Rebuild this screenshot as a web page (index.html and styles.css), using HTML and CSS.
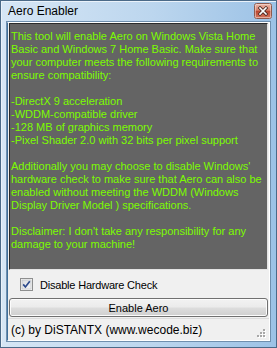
FILE: index.html
```html
<!DOCTYPE html>
<html>
<head>
<meta charset="utf-8">
<link rel="stylesheet" href="styles.css">
</head>
<body>
<div class="window">
  <div class="titlebar">
    <span class="title">Aero Enabler</span>
    <svg class="close" width="18" height="16" viewBox="0 0 18 16">
      <defs>
        <linearGradient id="cg" x1="0" y1="0" x2="0" y2="1">
          <stop offset="0" stop-color="#eab3a3"/>
          <stop offset="0.45" stop-color="#d8806a"/>
          <stop offset="0.5" stop-color="#b8432d"/>
          <stop offset="1" stop-color="#d4745c"/>
        </linearGradient>
      </defs>
      <rect x="0.5" y="0.5" width="17" height="15" rx="2" fill="#f4e6e2" stroke="#8e5a4e"/>
      <rect x="1.5" y="1.5" width="15" height="13" rx="1" fill="url(#cg)"/>
      <path d="M6 5 L12 11 M12 5 L6 11" stroke="#4a2a22" stroke-width="3.2" stroke-linecap="square"/>
      <path d="M6 5 L12 11 M12 5 L6 11" stroke="#ffffff" stroke-width="1.6" stroke-linecap="square"/>
    </svg>
  </div>
  <div class="client">
    <div class="textbox">
      <p class="info">This tool will enable Aero on Windows Vista Home<br>Basic and Windows 7 Home Basic. Make sure that<br>your computer meets the following requirements to<br>ensure compatibility:<br><br>-DirectX 9 acceleration<br>-WDDM-compatible driver<br>-128 MB of graphics memory<br>-Pixel Shader 2.0 with 32 bits per pixel support<br><br>Additionally you may choose to disable Windows'<br>hardware check to make sure that Aero can also be<br>enabled without meeting the WDDM (Windows<br>Display Driver Model ) specifications.<br><br>Disclaimer: I don't take any responsibility for any<br>damage to your machine!</p>
    </div>
    <label class="check-row">
      <svg class="checkbox" width="13" height="13" viewBox="0 0 13 13">
        <defs>
          <linearGradient id="kg" x1="0" y1="0" x2="1" y2="1">
            <stop offset="0" stop-color="#d9dcdf"/>
            <stop offset="1" stop-color="#f6f6f6"/>
          </linearGradient>
        </defs>
        <rect x="0.5" y="0.5" width="12" height="12" fill="#f4f4f4" stroke="#8e8f8f"/>
        <rect x="2" y="2" width="9" height="9" fill="url(#kg)" stroke="#b9bcc0" stroke-width="0.6"/>
        <path d="M3.2 6.4 L5.4 9 L9.8 3.2" fill="none" stroke="#2c4a8c" stroke-width="1.7"/>
      </svg>
      <span>Disable Hardware Check</span>
    </label>
    <button class="btn">Enable Aero</button>
    <div class="statusbar">
      <span>(c) by DiSTANTX (www.wecode.biz)</span>
      <svg class="grip" width="10" height="10" viewBox="0 0 10 10">
        <g fill="#ffffff">
          <rect x="8" y="2" width="2" height="2"/>
          <rect x="5" y="5" width="2" height="2"/>
          <rect x="8" y="5" width="2" height="2"/>
          <rect x="2" y="8" width="2" height="2"/>
          <rect x="5" y="8" width="2" height="2"/>
          <rect x="8" y="8" width="2" height="2"/>
        </g>
        <g fill="#a8a8a8">
          <rect x="7" y="1" width="2" height="2"/>
          <rect x="4" y="4" width="2" height="2"/>
          <rect x="7" y="4" width="2" height="2"/>
          <rect x="1" y="7" width="2" height="2"/>
          <rect x="4" y="7" width="2" height="2"/>
          <rect x="7" y="7" width="2" height="2"/>
        </g>
      </svg>
    </div>
  </div>
</div>
</body>
</html>
```

FILE: styles.css
```css
html, body {
  margin: 0;
  padding: 0;
  width: 277px;
  height: 348px;
  overflow: hidden;
  background: #ffffff;
}

.window {
  box-sizing: border-box;
  width: 277px;
  height: 348px;
  border: 1px solid #4b6a88;
  background: linear-gradient(to right, #d6e6f5 0%, #bcd6ee 55%, #9cc2e6 100%);
  box-shadow: inset 1px 1px 0 #eaf2fa;
  display: flex;
  flex-direction: column;
  padding: 0 6px 6px 6px;
  font-family: "Liberation Sans", Arial, sans-serif;
}

.titlebar {
  height: 21px;
  display: flex;
  align-items: center;
  justify-content: space-between;
  padding-left: 1px;
}

.title {
  font-size: 12px;
  color: #000;
  margin-top: -1px;
}

.close {
  display: block;
  margin-right: -2px;
  margin-top: -1px;
}

.client {
  flex: 1;
  display: flex;
  flex-direction: column;
  background: #f0f0f0;
  border: 1px solid #ffffff;
  border-left-color: #3f6f9b;
  border-top-color: #ffffff;
  outline: 1px solid #6f8fae;
}

.textbox {
  box-sizing: border-box;
  height: 247px;
  margin: 0 1px;
  background: #646464;
  border: 1px solid;
  border-color: #2b2b2b #e3e3e3 #e3e3e3 #2b2b2b;
  padding: 6px 2px 0 1px;
}

.info {
  margin: 0;
  font-size: 11px;
  line-height: 13px;
  color: #7cfc00;
  white-space: nowrap;
}

.check-row {
  display: flex;
  align-items: center;
  margin-top: 8px;
  height: 13px;
  padding-left: 12px;
  gap: 7px;
  font-size: 11px;
  letter-spacing: -0.2px;
  color: #000;
}

.checkbox {
  display: block;
}

.btn {
  box-sizing: border-box;
  margin: 7px 1px 0 1px;
  height: 19px;
  border: 1px solid #707070;
  border-radius: 3px;
  background: linear-gradient(to bottom, #f2f2f2 0%, #ebebeb 48%, #dddddd 52%, #cfcfcf 100%);
  box-shadow: inset 0 0 0 1px #fcfcfc;
  font-family: "Liberation Sans", Arial, sans-serif;
  font-size: 11px;
  color: #000;
  padding: 0;
}

.statusbar {
  flex: 1;
  display: flex;
  align-items: center;
  justify-content: space-between;
  border-top: 1px solid #dcdcdc;
  margin-top: 1px;
  padding-left: 3px;
  padding-right: 3px;
  font-size: 12px;
  color: #000;
}

.grip {
  display: block;
  align-self: flex-end;
  margin-bottom: 2px;
}
```
